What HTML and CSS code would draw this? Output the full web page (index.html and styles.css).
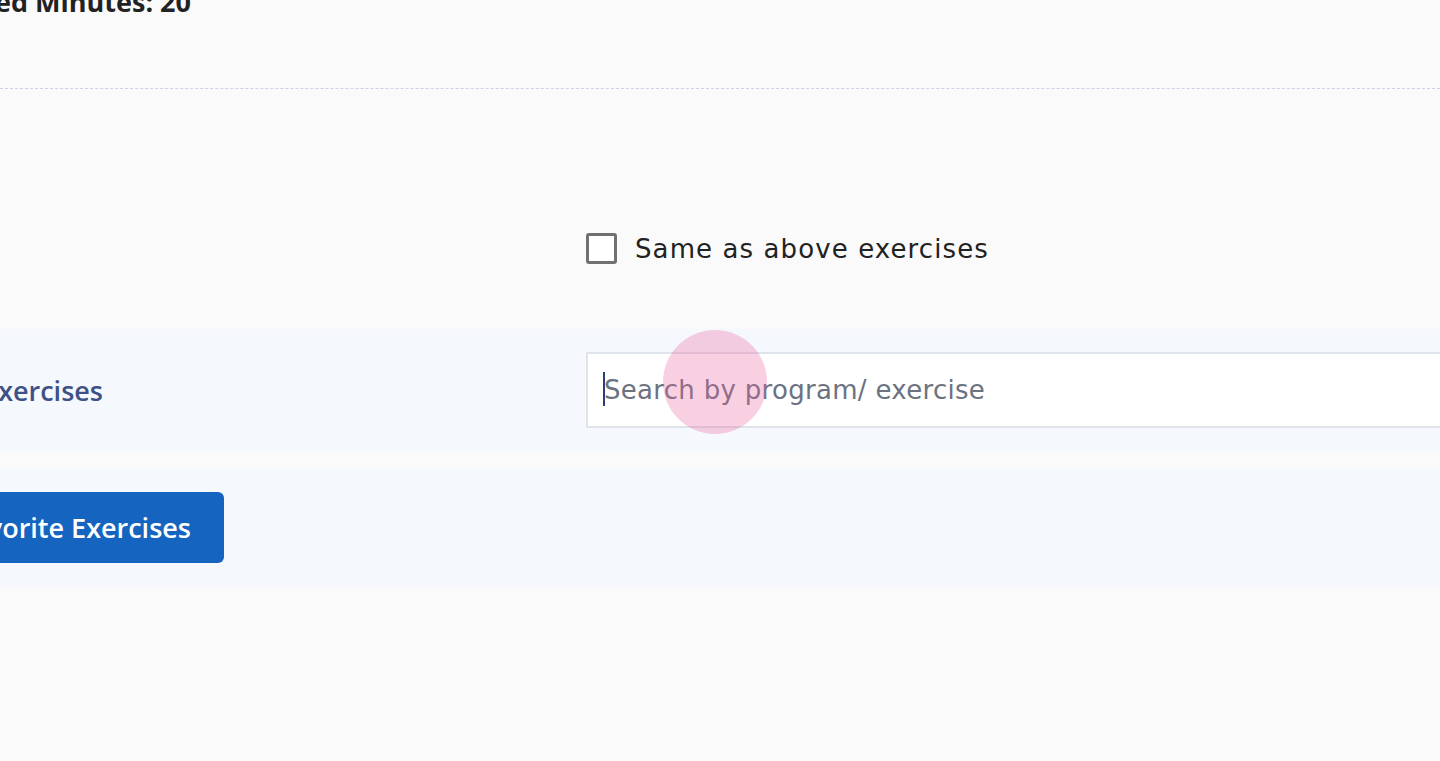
FILE: index.html
```html
<!DOCTYPE html>
<html lang="en">
<head>
<meta charset="utf-8">
<title>Exercises</title>
<link rel="stylesheet" href="styles.css">
</head>
<body>
<div class="page">
  <div class="summary">
    <div class="summary-end"><span class="summary-text">Prescribed Minutes: 20</span></div>
  </div>
  <div class="divider"></div>

  <div class="row row-check">
    <div class="label-cell"></div>
    <div class="control-cell">
      <label class="check">
        <span class="check-box"></span>
        <span class="check-text">Same as above exercises</span>
      </label>
    </div>
  </div>

  <div class="row row-band row-search">
    <div class="label-cell">
      <div class="label-end"><span class="label-text">Other Exercises</span></div>
    </div>
    <div class="control-cell">
      <div class="search">
        <input class="search-input" type="text" placeholder="Search by program/ exercise">
        <span class="caret"></span>
        <span class="touch"></span>
      </div>
    </div>
  </div>

  <div class="row row-band row-button">
    <div class="button-end">
      <button class="primary-btn" type="button">Add Favorite Exercises</button>
    </div>
  </div>
</div>
</body>
</html>
```

FILE: styles.css
```css
html, body {
  margin: 0;
  padding: 0;
  background: #fafafa;
  overflow: hidden;
}

.page {
  font-family: "DejaVu Sans", "Open Sans", sans-serif;
  width: 1440px;
  height: 761px;
  overflow: hidden;
}

.summary {
  margin-top: -18px;
  height: 40px;
}

.summary-end {
  width: 191px;
  display: flex;
  justify-content: flex-end;
}

.summary-text {
  white-space: nowrap;
  font-family: "Open Sans", sans-serif;
  font-size: 27px;
  line-height: 40px;
  font-weight: 700;
  color: #222222;
}

.divider {
  margin-top: 66px;
  border-top: 1px dashed #cfcdf2;
}

.row {
  display: grid;
  grid-template-columns: 586px 1fr;
  align-items: center;
}

.row-check {
  margin-top: 143px;
  height: 33px;
}

.row-band {
  background: #f5f8fd;
}

.row-search {
  height: 122px;
  margin-top: 64px;
}

.label-end {
  width: 103px;
  display: flex;
  justify-content: flex-end;
}

.label-text {
  white-space: nowrap;
  font-family: "Open Sans", sans-serif;
  font-size: 27px;
  font-weight: 600;
  color: #3e5187;
}

.check {
  display: flex;
  align-items: center;
  gap: 18px;
}

.check-box {
  width: 25px;
  height: 25px;
  border: 3px solid #707070;
  border-radius: 3px;
  background: #ffffff;
}

.check-text {
  font-size: 26px;
  letter-spacing: 1.1px;
  color: #222222;
  white-space: nowrap;
}

.search {
  position: relative;
  width: 1000px;
}

.search-input {
  box-sizing: border-box;
  width: 100%;
  height: 76px;
  border: 2px solid #dfe3ea;
  background: #ffffff;
  padding: 0 0 0 16px;
  font-family: inherit;
  font-size: 26px;
  letter-spacing: 0.3px;
  color: #222222;
  outline: none;
}

.search-input::placeholder {
  color: #6b7280;
}

.caret {
  position: absolute;
  left: 17px;
  top: 20px;
  width: 2px;
  height: 34px;
  background: #2c3e78;
}

.touch {
  position: absolute;
  left: 77px;
  top: -22px;
  width: 104px;
  height: 104px;
  border-radius: 50%;
  background: rgba(236, 100, 160, 0.3);
  pointer-events: none;
}

.row-button {
  display: flex;
  margin-top: 17px;
  height: 118px;
}

.button-end {
  width: 224px;
  display: flex;
  justify-content: flex-end;
}

.primary-btn {
  white-space: nowrap;
  height: 71px;
  border: none;
  border-radius: 6px;
  background: #1565c0;
  color: #ffffff;
  font-family: "Open Sans", sans-serif;
  font-size: 27px;
  font-weight: 600;
  padding: 0 33px 0 40px;
}
```
